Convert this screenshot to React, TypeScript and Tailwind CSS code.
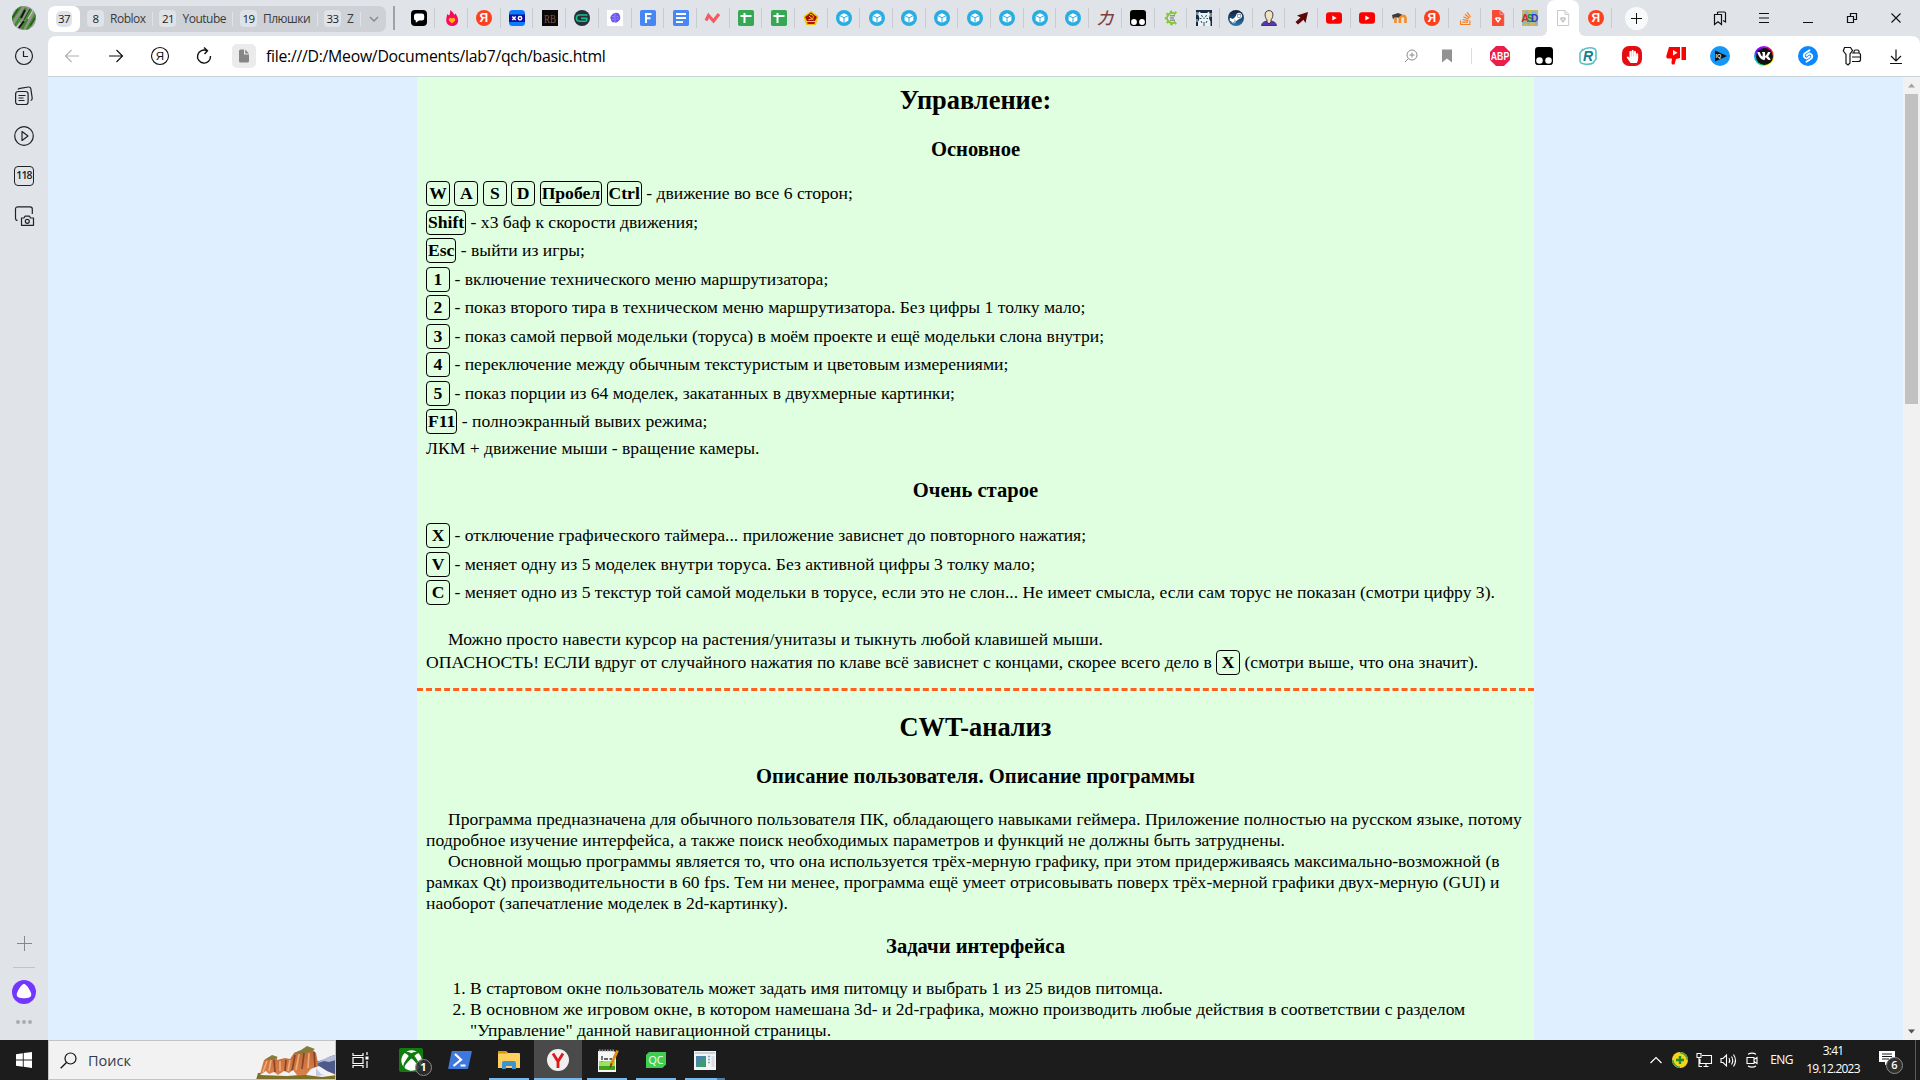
import React from "react";
import { FaSteamSymbol, FaStackOverflow, FaXbox, FaHandPaper, FaVk } from "react-icons/fa";

const UI = "font-['Open_Sans','Noto_Sans',sans-serif]";

type P = { children?: React.ReactNode };

function Svg({ s = 16, vb = "0 0 16 16", children }: { s?: number; vb?: string; children: React.ReactNode }) {
  return (
    <svg width={s} height={s} viewBox={vb} fill="none" className="block shrink-0 overflow-visible">
      {children}
    </svg>
  );
}

/* ---------- favicons ---------- */

const YandexIcon = () => (
  <Svg>
    <circle cx="8" cy="8" r="8" fill="#fc3f1d" />
    <text x="7.8" y="12.3" fontSize="12" fontWeight="700" fill="#fff" textAnchor="middle" fontFamily="Liberation Sans">Я</text>
  </Svg>
);
const ChatIcon = () => (
  <Svg>
    <rect width="16" height="16" rx="4" fill="#000" />
    <path d="M5 3.500h6a2.200 2.200 0 0 1 2.200 2.200v2.600A2.200 2.200 0 0 1 11 10.500H8l-3.200 2.300v-2.300A2 2 0 0 1 3 8.300V5.700A2.200 2.200 0 0 1 5 3.500z" fill="#fff" />
  </Svg>
);
const FlameIcon = () => (
  <Svg>
    <path d="M6 0c3 2 4 3.500 4 5l1.500-1.500C13 6 14.200 8 14.200 10.500A6 5.600 0 0 1 2.200 10.500C2.200 8 3 5.500 3.200 4l2 1.500C6 4 6.400 2 6 0z" fill="#f7095e" />
    <path d="M8 13.500 5 10.700a1.700 1.700 0 0 1 3-2 1.700 1.700 0 0 1 3 2z" fill="#ffb700" />
  </Svg>
);
const XoIcon = () => (
  <Svg>
    <rect width="16" height="16" rx="3.500" fill="#0a7cff" />
    <rect y="4.500" width="16" height="7.500" fill="#10109c" />
    <path d="m3.300 6.500 3.400 3.500m0-3.500L3.300 10" stroke="#fff" strokeWidth="1.500" />
    <circle cx="11" cy="8.200" r="1.700" stroke="#fff" strokeWidth="1.500" />
  </Svg>
);
const RbIcon = () => (
  <Svg>
    <rect width="16" height="16" fill="#0b0806" />
    <text x="8" y="12.500" fontSize="12" textAnchor="middle" textLength="12" lengthAdjust="spacingAndGlyphs" fill="#7a5a48" fontFamily="Liberation Serif">RB</text>
  </Svg>
);
const GIcon = () => (
  <Svg>
    <circle cx="8" cy="8" r="8" fill="#24303f" />
    <path d="M13.500 5H5.500a3 3 0 0 0 0 6.200h5.800a1.500 1.500 0 0 0 1.500-1.500V8.300H7" stroke="#15c183" strokeWidth="1.500" />
  </Svg>
);
const BrainIcon = () => (
  <Svg>
    <rect width="16" height="16" fill="#fff" />
    <path d="M8 3c2.500-.8 5 .7 4.900 3 1 2 0 4.700-1.800 5.200-.9 1.500-2.600 1.800-3.400 1-2.200.5-3.500-.8-3.500-2.300C2.800 8 3.500 5.400 5 4.900 5.700 3.700 7 3 8 3z" fill="#6a55ef" />
    <path d="M8 3.500v8.800M5 6.500h2M9.500 6l2 1M5 9.300h2M9.500 9l2-.3" stroke="#a9a0ff" strokeWidth=".7" />
  </Svg>
);
const FormIcon = () => (
  <Svg>
    <rect width="16" height="16" rx="1.800" fill="#4687f3" />
    <path d="M6 13V4m-1 0h6.500M6 8.200h4.500" stroke="#fff" strokeWidth="2" />
  </Svg>
);
const DocIcon = () => (
  <Svg>
    <rect width="16" height="16" rx="1.800" fill="#4687f3" />
    <path d="M3 4h10M3 8h10M3 12h7" stroke="#fff" strokeWidth="1.900" />
  </Svg>
);
const ZigIcon = () => (
  <Svg>
    <path d="m1 10.500 2.500-5 5 5.500 5.500-7" stroke="#f75a60" strokeWidth="3.200" />
  </Svg>
);
const SheetIcon = () => (
  <Svg>
    <rect width="16" height="16" rx="1.800" fill="#35a853" />
    <path d="M2.500 6h11M6.500 3v10" stroke="#fff" strokeWidth="2" />
  </Svg>
);
const SovietIcon = () => (
  <Svg>
    <path d="M8 1.500 15 6.500 12.500 14.500h-9L1 6.500z" fill="#f4d700" stroke="#e5c400" />
    <path d="M8 2.500 14 7 12 11H4L2 7z" fill="#a80f0a" />
    <path d="M4 12h8l-.6 2H4.600z" fill="#b3130d" />
    <path d="M7 4.500c3-.3 4.300 2.500 2.500 4.300L5.500 9.800M6 6l4.500 4" stroke="#f4d700" strokeWidth="1" />
  </Svg>
);
const CubeIcon = () => (
  <Svg>
    <circle cx="8" cy="8" r="8" fill="#28ade3" />
    <path d="M8 3.300 12 5.300 8 7.300 4 5.300z" fill="#fff" />
    <path d="M3.600 6.100 7.500 8.100v4.600L3.600 10.600zM12.400 6.100 8.500 8.100v4.600l3.900-2.100z" fill="#fff" />
  </Svg>
);
const KanjiIcon = () => (
  <Svg>
    <text x="8" y="14" fontSize="16" textAnchor="middle" fill="#7c3f3b" fontFamily="Noto Sans CJK JP" fontStyle="italic" fontWeight="500">力</text>
  </Svg>
);
const TamperIcon = ({ s = 16 }: { s?: number }) => (
  <Svg s={s}>
    <rect width="16" height="16" rx="3" fill="#000" />
    <circle cx="4" cy="12" r="2.900" fill="#fff" />
    <circle cx="12" cy="12" r="2.900" fill="#fff" />
  </Svg>
);
const GearCIcon = () => (
  <Svg>
    <path d="M12.500 4.300A5 5 0 1 0 12.500 11.700" stroke="#7cc828" strokeWidth="1.900" />
    <path d="M13.500 3A6.600 6.600 0 1 0 13.500 13" stroke="#7cc828" strokeWidth="1.600" strokeDasharray="2.200 2.400" />
    <path d="M7 5.800h5M7 8h4M7 10.200h5" stroke="#6c6c6c" strokeWidth="1" />
  </Svg>
);
const PandaIcon = () => (
  <Svg>
    <rect width="16" height="16" fill="#172b40" />
    <path d="M3 1.500 5 3h6l2-1.500 1 3-1 4 1.500 3V16H2v-4l1.500-3.500L2 4z" fill="#e9f2f5" />
    <path d="M5 5.500l2 1M11 5.500l-2 1M8 7.500v1.500M5 11l1 2M11 11l-1 2M8 12v4M4 8.500h1.500M10.500 8.500H12" stroke="#24384d" strokeWidth=".9" />
    <path d="M1 2v3M15 3v4M1 9v3" stroke="#d5e4ea" strokeWidth="1" />
  </Svg>
);
const SteamIcon = () => (
  <div className="flex size-4 items-center justify-center rounded-full bg-linear-to-b from-[#111d3a] to-[#2679ad]">
    <FaSteamSymbol size={14} color="#fff" />
  </div>
);
const PersonIcon = () => (
  <Svg>
    <path d="M.5 15.500c.5-3 2.500-4 5-4.300h5c2.500.3 4.500 1.300 5 4.300z" fill="#5537b5" stroke="#2d2057" strokeWidth=".8" />
    <path d="M8 .6c2.500 0 4 1.700 3.900 4.200-.1 2.500-.9 3.800-1.900 5v2L8 14l-2-2.200v-2c-1-1.200-1.800-2.500-1.900-5C4 2.300 5.500.6 8 .6z" fill="#f3e3bd" stroke="#2d2540" strokeWidth=".9" />
  </Svg>
);
const ArrowIcon = () => (
  <Svg>
    <path d="M14 2 11.500 13 9.500 9.800 4 14.500 1.500 12 6.500 7.500 3 5.500z" fill="#5f0606" />
  </Svg>
);
const YoutubeIcon = () => (
  <Svg>
    <rect y="2.200" width="16" height="11.600" rx="3" fill="#ff0000" />
    <path d="M6.300 5.500v5L10.700 8z" fill="#fff" />
  </Svg>
);
const MoodleIcon = () => (
  <Svg>
    <path d="M3.500 13V8.500a2.200 2.200 0 0 1 4.400 0V13m0-4.500a2.800 2.800 0 0 1 5.600 0V13" stroke="#f58b27" strokeWidth="2.600" />
    <path d="M0 5 6 3l4 1.500L6.500 7.500l-4-.3L1 9.500z" fill="#3c3c3c" />
  </Svg>
);
const PdfIcon = ({ ghost }: { ghost?: boolean }) => (
  <Svg>
    <path
      d="M2.500.500h7.500l3.700 3.700v11.300H2.500z"
      fill={ghost ? "#fff" : "#fb4a33"}
      stroke={ghost ? "#c9c9c9" : "#fb4a33"}
    />
    <path d="M10 .5v3.800h3.700" stroke={ghost ? "#c9c9c9" : "#ff9d8d"} />
    <path d="M8 13 4.700 8.500l1.600-1.300h3.400l1.600 1.300z" fill={ghost ? "#c4c4c4" : "#fff"} />
    <circle cx="8" cy="9.300" r=".9" fill={ghost ? "#fff" : "#fb4a33"} />
  </Svg>
);
const AsdIcon = () => (
  <Svg>
    <rect width="16" height="16" fill="#a9b795" />
    <path d="M1 1h3M6 1h4M12 1h3M2 15h4M8 14h5M0 3h2M7 3h3" stroke="#d9b94c" strokeWidth="1.500" />
    <path d="M3 2.500h3M10 2.500h4M13 13.500h2M5 13.500h3M1 12.500h2" stroke="#7ab0df" strokeWidth="1.300" />
    <text x="3.200" y="12" fontSize="11" fontWeight="700" textAnchor="middle" fill="#d3272b" fontFamily="Liberation Sans">A</text>
    <text x="8.200" y="11.500" fontSize="10" fontWeight="700" textAnchor="middle" fill="#1b8b33" fontFamily="Liberation Sans">S</text>
    <text x="12.500" y="11.500" fontSize="10" fontWeight="700" textAnchor="middle" fill="#273fd0" fontFamily="Liberation Sans">D</text>
  </Svg>
);

const cubes = Array.from({ length: 8 }, () => CubeIcon);
const tabs: React.ComponentType[] = [
  ChatIcon, FlameIcon, YandexIcon, XoIcon, RbIcon, GIcon, BrainIcon, FormIcon, DocIcon, ZigIcon,
  SheetIcon, SheetIcon, SovietIcon, ...cubes, KanjiIcon, TamperIcon, GearCIcon, PandaIcon, SteamIcon,
  PersonIcon, ArrowIcon, YoutubeIcon, YoutubeIcon, MoodleIcon, YandexIcon,
  () => <FaStackOverflow size={15} color="#f48024" />,
  () => <PdfIcon />, AsdIcon, () => <PdfIcon ghost />, YandexIcon,
];
const ACTIVE = 35;

/* ---------- browser chrome ---------- */

function Group({ n, label, last }: { n: string; label: string; last?: boolean }) {
  return (
    <div className="flex h-4 items-center">
      <span className="flex h-[17px] w-[17px] items-center justify-center rounded-[4px] bg-[#dfe2e7] text-[11.500px] text-[#1c1c1c]">{n}</span>
      <span className={last ? "ml-[6px] w-[7px]" : "ml-[6px]"}>{label}</span>
    </div>
  );
}
const Div = () => <span className="h-[14px] w-px bg-[#e0e3e8]" />;

function TabBar() {
  return (
    <div className="flex h-9 items-center">
      <div className={`mt-px flex h-[26px] w-[338px] items-center rounded-[7px] bg-[#ced1d6] text-[12px] tracking-[-0.500px] text-[#3a3b3d] ${UI}`}>
        <div className="flex h-full w-8 items-center justify-center rounded-[7px] bg-white">
          <span className="flex size-4 items-center justify-center rounded-[5px] bg-[#dfe2e7] text-[11.500px] text-[#1c1c1c]">37</span>
        </div>
        <div className="ml-[7px] flex flex-1 items-center justify-between pr-[6px]">
          <Group n="8" label="Roblox" />
          <Div />
          <Group n="21" label="Youtube" />
          <Div />
          <Group n="19" label="Плюшки" />
          <Div />
          <Group n="33" label="Z" last />
          <Div />
          <Svg s={12} vb="0 0 12 12">
            <path d="m2 4 4 4 4-4" stroke="#85878a" strokeWidth="1.300" />
          </Svg>
        </div>
      </div>
      <span className="ml-[7px] h-6 w-[2px] bg-[#9fa2a6]" />
      <div className="ml-[7.700px] flex h-full">
        {tabs.map((Icon, i) =>
          i === ACTIVE ? (
            <div key={i} className="relative flex h-full w-[32.690px] items-center justify-center rounded-t-[8px] bg-white">
              <Icon />
              <span className="absolute bottom-0 -left-[6px] size-[6px] bg-[radial-gradient(circle_at_0_0,#e0e3e8_6px,#fff_6px)]" />
              <span className="absolute -right-[6px] bottom-0 size-[6px] bg-[radial-gradient(circle_at_100%_0,#e0e3e8_6px,#fff_6px)]" />
            </div>
          ) : (
            <div key={i} className="relative flex h-full w-[32.690px] items-center justify-center">
              <Icon />
              {i !== ACTIVE - 1 && <span className="absolute top-2 right-0 h-5 w-px bg-[#c9ccd0]" />}
            </div>
          ),
        )}
      </div>
      <div className="ml-[13px] flex size-[23px] items-center justify-center rounded-full bg-[#f8f9fa]">
        <Svg s={11} vb="0 0 11 11">
          <path d="M5.500 0v11M0 5.500h11" stroke="#111" />
        </Svg>
      </div>
      <div className="mr-[2px] ml-auto flex">
        <Cell>
          <Svg>
            <path d="M2.500 4.500h7v10L6 11.800l-3.500 2.700z" stroke="#111" strokeWidth="1.200" />
            <path d="M5.500 4.500V3q0-1 1-1H12.500q1 0 1 1v9l-2.500-1.500" stroke="#111" strokeWidth="1.200" />
          </Svg>
        </Cell>
        <Cell>
          <Svg>
            <path d="M3 3.500h10M3 8h10M3 12.500h10" stroke="#111" strokeWidth="1.200" />
          </Svg>
        </Cell>
        <Cell>
          <Svg>
            <path d="M3 12.500h10" stroke="#111" />
          </Svg>
        </Cell>
        <Cell>
          <Svg>
            <path d="M3.500 6.500h6v6h-6zM6.500 6.500v-3h6v6h-3" stroke="#111" strokeWidth="1.200" />
          </Svg>
        </Cell>
        <Cell>
          <Svg>
            <path d="m3.500 3.500 9 9m0-9-9 9" stroke="#111" strokeWidth="1.100" />
          </Svg>
        </Cell>
      </div>
    </div>
  );
}

function Cell({ children }: P) {
  return <div className="flex h-9 w-11 items-center justify-center">{children}</div>;
}

function Toolbar() {
  return (
    <div className="flex h-[41px] items-center rounded-t-[8px] border-b border-[#c8d4dc] bg-white pl-[2px]">
      <Cell>
        <Svg>
          <path d="M15 8H1.500M7.500 2l-6 6 6 6" stroke="#b0b0b0" strokeWidth="1.100" />
        </Svg>
      </Cell>
      <Cell>
        <Svg>
          <path d="M1 8h13.500M8.500 2l6 6-6 6" stroke="#111" strokeWidth="1.200" />
        </Svg>
      </Cell>
      <Cell>
        <Svg s={20} vb="0 0 20 20">
          <circle cx="10" cy="10" r="8.500" stroke="#111" strokeWidth="1.100" />
          <text x="9.800" y="14.200" fontSize="11.500" textAnchor="middle" fill="#111" fontFamily="Liberation Sans">Я</text>
        </Svg>
      </Cell>
      <Cell>
        <Svg s={18} vb="0 0 18 18">
          <path d="M12 3.800A6.500 6.500 0 1 0 15.500 9" stroke="#111" strokeWidth="1.400" />
          <path d="M9 .5l3.500 3.300L9.500 7" stroke="#111" strokeWidth="1.400" />
        </Svg>
      </Cell>
      <div className="ml-[6px] flex size-6 items-center justify-center rounded-[5px] bg-[#ebebeb]">
        <Svg s={14} vb="0 0 14 14">
          <path d="M2 2q0-1.500 1.500-1.500H7V5.500h5v6.500q0 1.500-1.500 1.500h-7Q2 13.500 2 12z" fill="#868686" />
          <path d="M8.200.5 12 4.400H8.200z" fill="#868686" />
        </Svg>
      </div>
      <span className={`ml-[10px] w-[360px] text-[15.800px] leading-5 whitespace-nowrap text-black ${UI}`}>
        <span className="tracking-[-0.270px]">file:///D:/Meow/Documents/lab7/qch/basic.html</span>
      </span>
      <div className="mr-[2px] ml-auto flex items-center">
        <div className="mr-[22px]">
          <Svg s={14} vb="0 0 14 14">
            <circle cx="8" cy="6" r="5" stroke="#8a8a8a" />
            <path d="M4.500 9.500 1 13M8 3.500v5M5.500 6h5" stroke="#8a8a8a" />
          </Svg>
        </div>
        <Svg s={14} vb="0 0 14 14">
          <path d="M2 .5h10v13L7 9.500l-5 4z" fill="#929292" />
        </Svg>
        <span className="mr-[6px] ml-[17px] h-4 w-px bg-[#dcdcdc]" />
        <Cell>
          <Svg s={20} vb="0 0 20 20">
            <path d="M6 0h8l6 6v8l-6 6H6l-6-6V6z" fill="#ee1c4a" />
            <text x="10" y="14" fontSize="11" fontWeight="700" textAnchor="middle" textLength="18.500" lengthAdjust="spacingAndGlyphs" fill="#fff" fontFamily="Liberation Sans">ABP</text>
          </Svg>
        </Cell>
        <Cell><TamperIcon s={18} /></Cell>
        <Cell>
          <Svg s={18} vb="0 0 18 18">
            <path d="M3 3.500Q9-1 16 2l1 2v8l-3 4M15 15.500Q9 19 2 16l-1-2V6l3-4" stroke="#5cc0c4" strokeWidth="1.600" />
            <text x="9" y="14" fontSize="14" fontWeight="700" fontStyle="italic" textAnchor="middle" fill="#167d8c" fontFamily="Liberation Sans">R</text>
          </Svg>
        </Cell>
        <Cell>
          <div className="flex size-5 items-center justify-center rounded-[7px] bg-[#e40d13]">
            <FaHandPaper size={13} color="#fff" />
          </div>
        </Cell>
        <Cell>
          <Svg s={20} vb="0 0 20 20">
            <path d="M3 1h11v11l-4 1-1.500 5.500Q5 19 5.500 16L6 12.500H1.500Q0 12 .3 10z" fill="#ff0000" />
            <rect x="15.500" y="1" width="4.500" height="13" fill="#ff0000" />
            <path d="m7 4 4.500 2.700L7 9.500z" fill="#fff" />
          </Svg>
        </Cell>
        <Cell>
          <Svg s={20} vb="0 0 20 20">
            <circle cx="10" cy="10" r="10" fill="#1497f7" />
            <path d="M5 4.500 17 10 5 15.500z" fill="#111" />
            <text x="8.500" y="12" fontSize="5.500" fontWeight="700" textAnchor="middle" fill="#d8e6ee" fontFamily="Liberation Sans">IQ</text>
          </Svg>
        </Cell>
        <Cell>
          <div className="flex size-5 items-center justify-center rounded-full bg-[conic-gradient(#b400ff,#ff0055,#ffcc00,#e8ff00,#00e676,#00b8ff,#7a00ff,#b400ff)]">
            <div className="flex size-[17px] items-center justify-center rounded-full bg-[#111]">
              <FaVk size={14} color="#fff" />
            </div>
          </div>
        </Cell>
        <Cell>
          <Svg s={20} vb="0 0 20 20">
            <circle cx="10" cy="10" r="10" fill="#0a88ff" />
            <path d="M11.500 4.300 7 7.300a2.700 2.700 0 0 0-.3 4.300 2.600 2.600 0 0 0 3.500 0l1.300-1M8.500 15.700 13 12.700a2.700 2.700 0 0 0 .3-4.300 2.600 2.600 0 0 0-3.500 0l-1.300 1" stroke="#fff" strokeWidth="1.900" strokeLinecap="round" />
          </Svg>
        </Cell>
        <Cell>
          <Svg s={20} vb="0 0 20 20">
            <path d="M2.500 1.500h6l2 3-2.500 3.500v9L6 19 4 17.500V8.500L1.300 5z" stroke="#111" strokeWidth="1.200" />
            <path d="M12 7V5.500q0-1.500 1.500-1.500h2Q17 4 17 5.500V7M10 7h6.500q2 0 2 2v4.500q0 2-2 2H10M10 11h8" stroke="#111" strokeWidth="1.200" />
          </Svg>
        </Cell>
        <Cell>
          <Svg s={18} vb="0 0 18 18">
            <path d="M9 2.500v11M4 9l5 5 5-5M3 16.500h12" stroke="#111" strokeWidth="1.200" />
          </Svg>
        </Cell>
      </div>
    </div>
  );
}

function Side({ children }: P) {
  return <div className="flex h-10 w-12 items-center justify-center">{children}</div>;
}

function Sidebar() {
  return (
    <div className="flex h-[1040px] w-12 shrink-0 flex-col items-center bg-[#e0e3e8]">
      <div className="flex h-9 items-center">
        <svg width="24" height="24" viewBox="0 0 24 24" className="block rounded-full">
          <rect width="24" height="24" fill="#8d9488" />
          <path d="M-2 16 9 0M3 20 14 2M10 23 20 4M15 24 24 8" stroke="#3f8a2a" strokeWidth="2.600" />
          <path d="M0 12 6 3M12 14 18 3M18 20l5-8" stroke="#255a1c" strokeWidth="1.500" />
          <path d="m7 22 5-7M9 12l4-8" stroke="#10180d" strokeWidth="2" />
          <path d="M4 22 8 17M16 13l5-9" stroke="#c3c7c4" strokeWidth="1.400" />
        </svg>
      </div>
      <Side>
        <Svg s={20} vb="0 0 20 20">
          <circle cx="10" cy="10" r="8.500" stroke="#222" strokeWidth="1.200" />
          <path d="M9.500 5v5.500H14" stroke="#222" strokeWidth="1.200" />
        </Svg>
      </Side>
      <Side>
        <Svg s={20} vb="0 0 20 20">
          <rect x="1.600" y="5.500" width="12.500" height="13" rx="2.500" stroke="#222" strokeWidth="1.200" />
          <path d="M4.500 9.500h7M4.500 12h5M4.500 14.500h6M4 3.500q.5-1 2-1.200l8.500-1.300q2-.2 2.300 1.700l1.400 9.300q.2 2-1.500 2.500" stroke="#222" strokeWidth="1.200" />
        </Svg>
      </Side>
      <Side>
        <Svg s={20} vb="0 0 20 20">
          <circle cx="10" cy="10" r="9.300" stroke="#222" strokeWidth="1.200" />
          <path d="M8 5.500v9L14 10z" stroke="#222" strokeWidth="1.200" strokeLinejoin="round" />
        </Svg>
      </Side>
      <Side>
        <span className={`flex size-5 items-center justify-center rounded-[4px] border border-[#222] text-[10.500px] font-semibold tracking-[-0.900px] text-[#222] ${UI}`}>118</span>
      </Side>
      <Side>
        <Svg s={20} vb="0 0 20 20">
          <path d="M3.500 14.500Q1.500 14.500 1.500 12V3Q1.500.8 4 .8h12Q18.300.8 18.300 3v5" stroke="#222" strokeWidth="1.200" />
          <path d="M7.500 19.300V12h2.500l1-1.800h4.500l1 1.800h3v7.300z" stroke="#222" strokeWidth="1.200" strokeLinejoin="round" />
          <circle cx="13.300" cy="15.300" r="2" stroke="#222" strokeWidth="1.200" />
        </Svg>
      </Side>
      <div className="mt-auto flex h-[104px] flex-col items-center">
        <Svg s={15} vb="0 0 15 15">
          <path d="M7.500 0v15M0 7.500h15" stroke="#85878b" />
        </Svg>
        <span className="mt-4 h-px w-[22px] bg-[#c0c3c7]" />
        <span className="mt-[12px]">
          <Svg s={24} vb="0 0 24 24">
            <circle cx="12" cy="12" r="12" fill="#7336ff" />
            <path d="M12 4c2.500 0 7.300 7.500 7.300 10.700 0 2.300-3 3.600-7.300 3.600s-7.300-1.300-7.300-3.600C4.700 11.500 9.500 4 12 4z" fill="#fff" />
          </Svg>
        </span>
        <span className="mt-4 flex gap-[2px]">
          <i className="size-1 rounded-full bg-[#a9acb0]" />
          <i className="size-1 rounded-full bg-[#a9acb0]" />
          <i className="size-1 rounded-full bg-[#a9acb0]" />
        </span>
      </div>
    </div>
  );
}

/* ---------- document ---------- */

function Key({ children }: P) {
  return (
    <b className="inline-block h-[25px] min-w-[24px] rounded-[4px] border border-black px-px text-center leading-[23px]">{children}</b>
  );
}

function Row({ keys, children }: { keys: string[]; children: React.ReactNode }) {
  return (
    <div className="h-[28.500px] leading-[25px]">
      {keys.map((k) => (
        <React.Fragment key={k}>
          <Key>{k}</Key>{" "}
        </React.Fragment>
      ))}
      {children}
    </div>
  );
}

const H2 = ({ children }: P) => <h2 className="text-center text-[26.400px] leading-[31px] font-bold">{children}</h2>;
const H3 = ({ children }: P) => <h3 className="text-center text-[20.590px] leading-6 font-bold">{children}</h3>;

function Document() {
  return (
    <div className="h-full w-[1117px] overflow-hidden bg-[#dfffe0] font-['Liberation_Serif','Times_New_Roman',serif] text-[17.600px] leading-[21px] text-black">
      <div className="px-[9px] pt-2">
        <H2>Управление:</H2>
        <div className="mt-[21px]"><H3>Основное</H3></div>
        <div className="mt-[20px]">
          <Row keys={["W", "A", "S", "D", "Пробел", "Ctrl"]}>- движение во все 6 сторон;</Row>
          <Row keys={["Shift"]}>- х3 баф к скорости движения;</Row>
          <Row keys={["Esc"]}>- выйти из игры;</Row>
          <Row keys={["1"]}>- включение технического меню маршрутизатора;</Row>
          <Row keys={["2"]}>- показ второго тира в техническом меню маршрутизатора. Без цифры 1 толку мало;</Row>
          <Row keys={["3"]}>- показ самой первой модельки (торуса) в моём проекте и ещё модельки слона внутри;</Row>
          <Row keys={["4"]}>- переключение между обычным текстуристым и цветовым измерениями;</Row>
          <Row keys={["5"]}>- показ порции из 64 моделек, закатанных в двухмерные картинки;</Row>
          <Row keys={["F11"]}>- полноэкранный вывих режима;</Row>
          <div>ЛКМ + движение мыши - вращение камеры.</div>
        </div>
        <div className="mt-[19.500px]"><H3>Очень старое</H3></div>
        <div className="mt-[21px]">
          <Row keys={["X"]}>- отключение графического таймера... приложение зависнет до повторного нажатия;</Row>
          <Row keys={["V"]}>- меняет одну из 5 моделек внутри торуса. Без активной цифры 3 толку мало;</Row>
          <Row keys={["C"]}>- меняет одно из 5 текстур той самой модельки в торусе, если это не слон... Не имеет смысла, если сам торус не показан (смотри цифру 3).</Row>
        </div>
        <p className="mt-5 indent-[22px]">Можно просто навести курсор на растения/унитазы и тыкнуть любой клавишей мыши.</p>
        <p className="h-[38.500px] leading-[25px] whitespace-nowrap">
          ОПАСНОСТЬ! ЕСЛИ вдруг от случайного нажатия по клаве всё зависнет с концами, скорее всего дело в <Key>X</Key> (смотри выше, что она значит).
        </p>
      </div>
      <div className="border-t-[3px] border-dashed border-[#ff5f1f]" />
      <div className="px-[9px] pt-[21px]">
        <H2>CWT-анализ</H2>
        <div className="mt-[21px]"><H3>Описание пользователя. Описание программы</H3></div>
        <div className="mt-[21px]">
          <p className="indent-[22px]">Программа предназначена для обычного пользователя ПК, обладающего навыками геймера. Приложение полностью на русском языке, потому подробное изучение интерфейса, а также поиск необходимых параметров и функций не должны быть затруднены.</p>
          <p className="indent-[22px]">Основной мощью программы является то, что она используется трёх-мерную графику, при этом придерживаясь максимально-возможной (в рамках Qt) производительности в 60 fps. Тем ни менее, программа ещё умеет отрисовывать поверх трёх-мерной графики двух-мерную (GUI) и наоборот (запечатление моделек в 2d-картинку).</p>
        </div>
        <div className="mt-[20px]"><H3>Задачи интерфейса</H3></div>
        <ol className="mt-[20px] list-decimal pr-10 pl-[44px]">
          <li>В стартовом окне пользователь может задать имя питомцу и выбрать 1 из 25 видов питомца.</li>
          <li>В основном же игровом окне, в котором намешана 3d- и 2d-графика, можно производить любые действия в соответствии с разделом "Управление" данной навигационной страницы.</li>
        </ol>
      </div>
    </div>
  );
}

function Scrollbar() {
  return (
    <div className="flex w-[17px] shrink-0 flex-col items-center bg-[#f1f1f1]">
      <Svg s={17} vb="0 0 17 17"><path d="M5 10.500h7L8.500 6.500z" fill="#a3a3a3" /></Svg>
      <div className="h-[310px] w-[13px] bg-[#c1c1c1]" />
      <span className="mt-auto"><Svg s={17} vb="0 0 17 17"><path d="M5 6.500h7l-3.500 4z" fill="#505050" /></Svg></span>
    </div>
  );
}

/* ---------- taskbar ---------- */

function App48({ children, bar, active }: P & { bar?: string; active?: boolean }) {
  return (
    <div className={active ? "flex h-10 w-12 flex-col items-center bg-[#4a4a4a]" : "flex h-10 w-12 flex-col items-center"}>
      <div className="flex h-[38px] items-center pt-[2px]">{children}</div>
      {bar && <div className={bar} />}
    </div>
  );
}

function SearchArt() {
  return (
    <svg width="80" height="34" viewBox="0 0 80 34" className="block">
      <defs>
        <linearGradient id="rock" x1="0" y1="0" x2="0" y2="1">
          <stop offset="0" stopColor="#b9673a" />
          <stop offset="1" stopColor="#dd8348" />
        </linearGradient>
      </defs>
      <path d="M60 24v-8l9-3 6-3 5-1v25H60z" fill="#4d5a8a" />
      <path d="m62 16 6-3 7-3 5-1v5l-7 2-5-1-6 2z" fill="#b3bcd6" />
      <path d="M0 34 2 27 24 26l38-1 18 2v7z" fill="#7f7027" />
      <path d="M4 28 8 14l5-3h8v3l8-2 5 1 4-6 8-3 10-1 4 4 2 10 1 11-28 2z" fill="url(#rock)" />
      <path d="m10 13 6-4 6 2-5 3zM38 7l7-3 6-4 8 3-5 3-9 2z" fill="#857c3b" />
      <path d="m18 14 1 12M30 14l-1 11M39 9l-3 16M48 7l-2 16M58 6l1 15" stroke="#8a4526" strokeWidth="1.700" />
      <path d="m11 15-4 11M15 14l-2 11M24 15v10M34 14l-2 11M43 8l-3 16M53 7l-1 15" stroke="#efaa78" strokeWidth="1.700" />
      <path d="m4 29 6-4 3 3 5-2 4 3 6-4 5 2 4-3 4 5-10 1zM50 29l5-6 8-3 8 5 9 4-14 2z" fill="#f2f3f9" />
      <path d="m60 22 5 6 4 1-9 1z" fill="#c4cbe0" />
    </svg>
  );
}

function Taskbar() {
  return (
    <div className={`flex h-10 bg-[#1c1c1c] text-white ${UI}`}>
      <div className="flex w-12 items-center justify-center">
        <Svg>
          <path d="M0 2.200 6.800 1.300v6.200H0zM7.700 1.100 16 0v7.500H7.700zM0 8.400h6.800v6.300L0 13.800zM7.700 8.400H16V16l-8.300-1.200z" fill="#fff" />
        </Svg>
      </div>
      <div className="flex w-72 items-center overflow-hidden border border-[#c4c4c4] bg-[#f2f2f2] pl-[11px]">
        <Svg s={17} vb="0 0 17 17">
          <circle cx="10.500" cy="6.500" r="5.500" stroke="#111" strokeWidth="1.200" />
          <path d="M6.500 10.500.7 16.300" stroke="#111" strokeWidth="1.300" />
        </Svg>
        <span className="mt-px ml-[11px] text-[14.500px] text-[#2e3c50]">Поиск</span>
        <span className="mt-[6px] -mr-px ml-auto"><SearchArt /></span>
      </div>
      <div className="flex w-12 items-center justify-center">
        <Svg s={17} vb="0 0 17 17">
          <path d="M1 1v2.500h10V1M1 16v-2.500h10V16M1 5.500h10v6H1zM15 0v3M15 9v7" stroke="#fff" strokeWidth="1.200" />
          <rect x="13.500" y="4.500" width="3" height="3" fill="#fff" />
        </Svg>
      </div>
      <div className="ml-[3px] flex gap-px">
        <App48>
          <div className="relative flex size-6 items-center justify-center rounded-[2px] bg-[#107c10]">
            <FaXbox size={21} color="#fff" />
            <span className="absolute -right-[9px] -bottom-[4px] flex size-[17px] items-center justify-center rounded-full border border-[#8b8b8b] bg-[#2b2b2bd9] text-[11px] font-bold">1</span>
          </div>
        </App48>
        <App48>
          <svg width="24" height="18" viewBox="0 0 24 18" className="block">
            <path d="M4.500 0H23q1 0 .8 1l-3.600 16q-.2 1-1.200 1H.8Q0 18 .2 17L3.500 1q.2-1 1-1z" fill="#3f78dd" />
            <path d="m7 3 6 5.800L5.500 15M12.500 14.500h5" stroke="#fff" strokeWidth="2.200" fill="none" />
          </svg>
        </App48>
        <App48 bar="h-[2px] w-10 bg-[#76b9ed]">
          <svg width="22" height="20" viewBox="0 0 22 20" className="block">
            <path d="M0 2q0-1 1-1h7l2 2h11q1 0 1 1v14H0z" fill="#fdcf5c" />
            <path d="M0 1h8l1.500 2.500H0z" fill="#d9960f" />
            <path d="M4 18v-5q0-2 2-2h10q2 0 2 2v6h-4v-3H8v3H4z" fill="#3c93d6" />
          </svg>
        </App48>
        <App48 active bar="h-[2px] w-12 bg-[#76b9ed]">
          <Svg s={22} vb="0 0 22 22">
            <circle cx="11" cy="11" r="11" fill="#f0f0f0" />
            <path d="M6 4.500 11 12.500 16 4.500M11 12v7" stroke="#e0161c" strokeWidth="2.800" />
          </Svg>
        </App48>
        <App48 bar="h-[2px] w-10 bg-[#76b9ed]">
          <Svg s={23} vb="0 0 23 23">
            <path d="M2 2h16l2 2v19H2z" fill="#f6f7f2" />
            <path d="M3 12h16v9H3z" fill="#9be35a" />
            <path d="M3 17h16v4H3z" fill="#3fa31c" />
            <path d="M3 1.500h15" stroke="#999" strokeWidth="2" strokeDasharray="1.500 1.200" />
            <path d="M6 7v6M8 10h8" stroke="#333" strokeWidth="1.300" strokeDasharray="4 1.500" />
            <path d="M21.500 1.500 15 16" stroke="#dd9214" strokeWidth="3" />
            <path d="m15.500 14.500-1.200 4" stroke="#5b3a1a" strokeWidth="1.500" />
          </Svg>
        </App48>
        <App48 bar="h-[2px] w-10 bg-[#76b9ed]">
          <svg width="20" height="16" viewBox="0 0 20 16" className="block">
            <path d="M3 0h17v12.500L16.500 16H0V3z" fill="#41cd52" />
            <text x="10" y="12.300" fontSize="11.500" textAnchor="middle" textLength="15" lengthAdjust="spacingAndGlyphs" fill="#fff" fontFamily="Open Sans">QC</text>
          </svg>
        </App48>
        <App48 bar="h-[2px] w-10 border-r-8 border-[#4f7da3] bg-[#76b9ed]">
          <svg width="22" height="19" viewBox="0 0 22 19" className="block">
            <path d="M0 0h22v19H0z" fill="#f2f4f5" />
            <path d="M1 1h20v2H1z" fill="#c9d3da" />
            <path d="M2 5h10v11H2z" fill="#4a86a8" />
            <path d="M2 16 12 5v11z" fill="#3e9b6d" />
            <path d="M14 5.500h2M14 8.500h2M14 11.500h2" stroke="#7fa9c4" strokeWidth="1.500" />
            <path d="M17.500 5h3v11h-3z" fill="#d8dee2" />
          </svg>
        </App48>
      </div>
      <div className="ml-auto flex items-center">
        <div className="flex w-6 justify-center">
          <Svg s={12} vb="0 0 12 12"><path d="m.5 9 5.500-5.500L11.500 9" stroke="#fff" strokeWidth="1.200" /></Svg>
        </div>
        <div className="flex w-6 justify-center">
          <Svg>
            <circle cx="8" cy="8" r="8" fill="#f5d51b" />
            <path d="M8 .8A7.200 7.200 0 0 1 15.200 8M8 15.200A7.200 7.200 0 0 1 .8 8" stroke="#43a047" strokeWidth="1.600" />
            <path d="M8 4v8M4 8h8" stroke="#1f8a2b" strokeWidth="2.400" />
          </Svg>
        </div>
        <div className="flex w-6 justify-center">
          <Svg>
            <path d="M6 3.500h9.500v8H4V7M7.500 14.500h5M10 11.500v3M1 1.500h4v4H1zM3 5.500V14.500h3" stroke="#fff" strokeWidth="1.100" />
          </Svg>
        </div>
        <div className="flex w-6 justify-center">
          <Svg s={17} vb="0 0 17 17">
            <path d="M1 6.500h2L6.500 3v11L3 10.500H1zM9 6q1.500 2.500 0 5M11.500 4.500q2.500 4 0 8M13.500 2.500q4 6 0 12" stroke="#fff" strokeWidth="1.100" />
          </Svg>
        </div>
        <div className="flex w-6 justify-center">
          <Svg>
            <path d="M3 5.500h7v6H3zM10 7.500l3-2v6l-3-2M4 2.300q4-2.300 8 0M4 14q4 2.300 8 0" stroke="#fff" strokeWidth="1.100" />
          </Svg>
        </div>
        <span className="ml-[6px] w-[23px] text-center text-[12px] tracking-[-0.7px]">ENG</span>
        <div className="ml-[12px] flex w-[56px] flex-col items-center text-[12px] leading-[18px] tracking-[-0.75px] whitespace-nowrap">
          <span>3:41</span>
          <span>19.12.2023</span>
        </div>
        <div className="relative ml-[18px] h-5 w-9">
          <Svg s={16}>
            <path d="M0 1h16v11H9l-3 3.500V12H0z" fill="#fff" />
            <path d="M3 4h10M3 6.500h10M3 9h7" stroke="#1c1c1c" />
          </Svg>
          <span className="absolute top-[7px] left-[7px] flex size-[17px] items-center justify-center rounded-full border border-[#8b8b8b] bg-[#2f2f2f] text-[11px] font-semibold">6</span>
        </div>
        <span className="h-10 w-px bg-[#5c5c5c]" />
        <span className="w-1" />
      </div>
    </div>
  );
}

export default function App() {
  return (
    <div className="h-[1080px] w-[1920px] overflow-hidden bg-[#e0e3e8]">
      <div className="flex h-[1040px]">
        <Sidebar />
        <div className="flex min-w-0 flex-1 flex-col">
          <TabBar />
          <Toolbar />
          <div className="flex min-h-0 flex-1">
            <div className="flex flex-1 bg-[#dfefff] pl-[369px]">
              <Document />
            </div>
            <Scrollbar />
          </div>
        </div>
      </div>
      <Taskbar />
    </div>
  );
}
